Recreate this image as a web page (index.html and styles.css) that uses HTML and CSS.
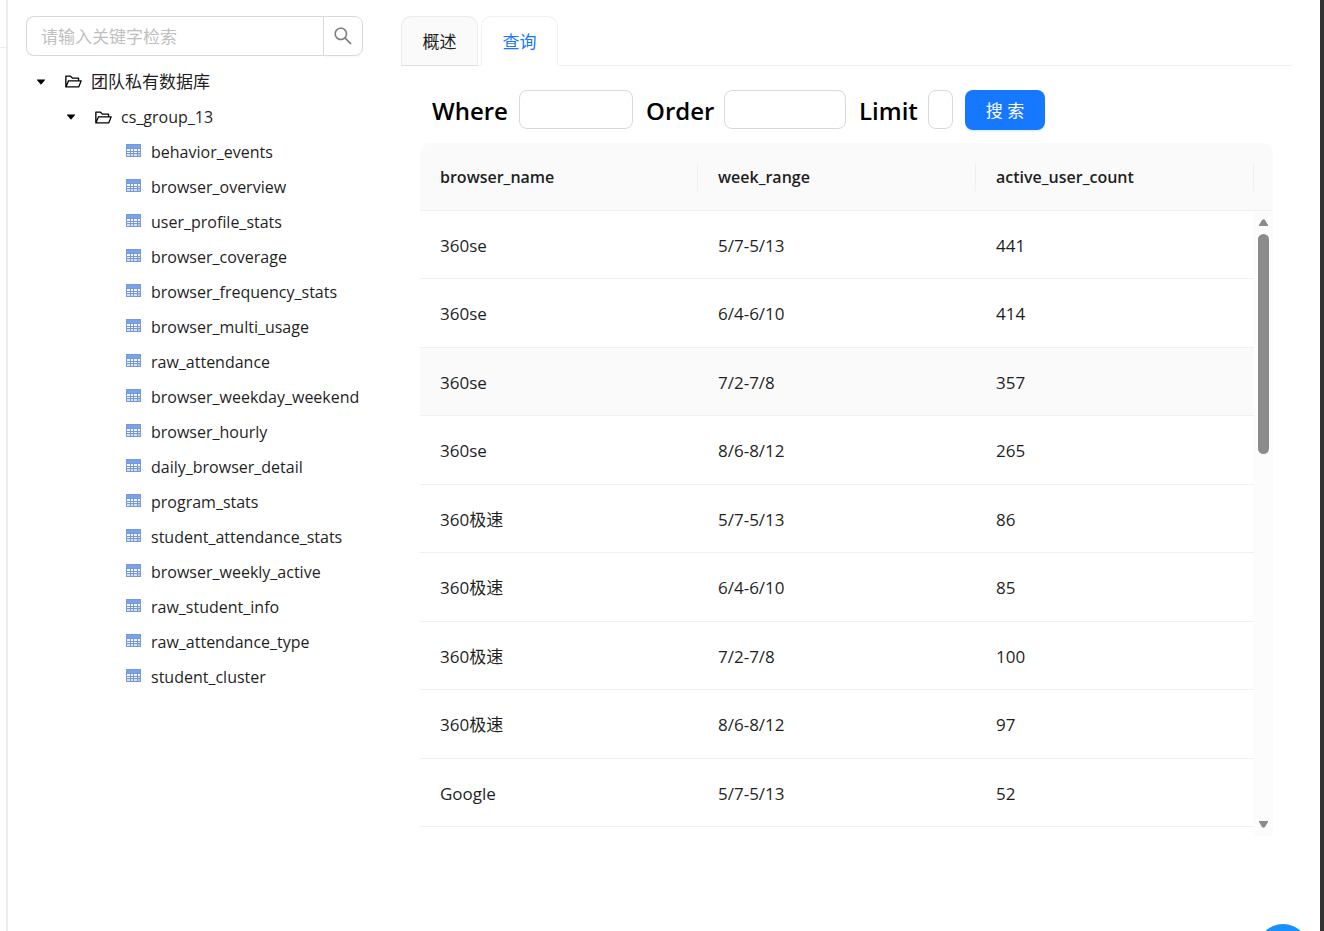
FILE: index.html
```html
<!DOCTYPE html>
<html lang="zh-CN">
<head>
<meta charset="utf-8">
<meta name="viewport" content="width=device-width, initial-scale=1">
<title>cs_group_13</title>
<link rel="stylesheet" href="styles.css">
</head>
<body>
<svg class="sprite" aria-hidden="true">
  <symbol id="folder" viewBox="0 0 1024 1024"><path d="M928 444H820V330.400c0-17.700-14.300-32-32-32H473L355.700 186.200a8.150 8.150 0 0 0-5.500-2.200H96c-17.700 0-32 14.300-32 32v592c0 17.700 14.300 32 32 32h698c13 0 24.800-7.900 29.700-20l134-332c1.500-3.800 2.300-7.900 2.300-12 0-17.700-14.300-32-32-32zM136 256h188.500l119.600 114.400H748V444H238c-13 0-24.800 7.900-29.700 20L136 643.200V256zm635.300 512H159l103.300-256h612.400L771.300 768z"/></symbol>
  <symbol id="caret" viewBox="0 0 1024 1024"><path d="M840.400 300H183.600c-19.700 0-30.700 20.800-18.500 35l328.400 380.800c9.400 10.900 27.500 10.900 37 0L858.900 335c12.200-14.200 1.200-35-18.500-35z"/></symbol>
  <symbol id="grid" viewBox="0 0 15 13">
    <rect width="15" height="13" fill="#7a98d2"/>
    <rect x="1" y="1" width="13" height="3" fill="#75a3ec"/>
    <path fill="#f2f8ff" d="M1 5h3v2H1zM5 5h2v2H5zM8 5h3v2H8zM12 5h2v2h-2zM1 8h3v1H1zM5 8h2v1H5zM8 8h3v1H8z"/>
    <path fill="#d0e2fb" d="M12 8h2v1h-2zM1 10h3v2H1zM5 10h2v2H5zM8 10h3v2H8z"/>
    <path fill="#aecbf5" d="M12 10h2v2h-2z"/>
  </symbol>
</svg>
<div class="app">
  <div class="rail"></div>
  <aside class="sidebar">
    <form class="search">
      <input class="search-input" type="text" placeholder="请输入关键字检索" aria-label="请输入关键字检索">
      <button class="search-button" type="button" aria-label="检索">
        <svg viewBox="0 0 1024 1024" width="22" height="22"><path fill="currentColor" d="M909.600 854.500L649.900 594.800C690.200 542.700 712 479 712 412c0-80.200-31.300-155.400-87.900-212.100-56.600-56.700-132-87.900-212.100-87.900s-155.500 31.300-212.100 87.900C143.200 256.500 112 331.800 112 412c0 80.100 31.300 155.500 87.900 212.100C256.500 680.800 331.800 712 412 712c67 0 130.600-21.800 182.700-62l259.700 259.600a8.200 8.200 0 0 0 11.600 0l43.600-43.500a8.200 8.200 0 0 0 0-11.600zM570.400 570.400C528 612.700 471.800 636 412 636s-116-23.300-158.400-65.600C211.300 528 188 471.800 188 412s23.300-116.100 65.600-158.400C296 211.300 352.200 188 412 188s116.100 23.200 158.400 65.600S636 352.200 636 412s-23.300 116.100-65.600 158.400z"/></svg>
      </button>
    </form>
    <ul class="tree">
      <li>
        <div class="node"><button class="toggle" type="button" aria-label="折叠"><svg class="caret"><use href="#caret"/></svg></button><a class="entry entry-root" href="#"><svg class="folder"><use href="#folder"/></svg>团队私有数据库</a></div>
        <ul class="branch">
          <li>
            <div class="node"><button class="toggle" type="button" aria-label="折叠"><svg class="caret"><use href="#caret"/></svg></button><a class="entry" href="#"><svg class="folder"><use href="#folder"/></svg>cs_group_13</a></div>
            <ul class="branch leaves">
              <li class="node"><a class="entry" href="#"><svg class="grid"><use href="#grid"/></svg>behavior_events</a></li>
              <li class="node"><a class="entry" href="#"><svg class="grid"><use href="#grid"/></svg>browser_overview</a></li>
              <li class="node"><a class="entry" href="#"><svg class="grid"><use href="#grid"/></svg>user_profile_stats</a></li>
              <li class="node"><a class="entry" href="#"><svg class="grid"><use href="#grid"/></svg>browser_coverage</a></li>
              <li class="node"><a class="entry" href="#"><svg class="grid"><use href="#grid"/></svg>browser_frequency_stats</a></li>
              <li class="node"><a class="entry" href="#"><svg class="grid"><use href="#grid"/></svg>browser_multi_usage</a></li>
              <li class="node"><a class="entry" href="#"><svg class="grid"><use href="#grid"/></svg>raw_attendance</a></li>
              <li class="node"><a class="entry" href="#"><svg class="grid"><use href="#grid"/></svg>browser_weekday_weekend</a></li>
              <li class="node"><a class="entry" href="#"><svg class="grid"><use href="#grid"/></svg>browser_hourly</a></li>
              <li class="node"><a class="entry" href="#"><svg class="grid"><use href="#grid"/></svg>daily_browser_detail</a></li>
              <li class="node"><a class="entry" href="#"><svg class="grid"><use href="#grid"/></svg>program_stats</a></li>
              <li class="node"><a class="entry" href="#"><svg class="grid"><use href="#grid"/></svg>student_attendance_stats</a></li>
              <li class="node"><a class="entry" href="#"><svg class="grid"><use href="#grid"/></svg>browser_weekly_active</a></li>
              <li class="node"><a class="entry" href="#"><svg class="grid"><use href="#grid"/></svg>raw_student_info</a></li>
              <li class="node"><a class="entry" href="#"><svg class="grid"><use href="#grid"/></svg>raw_attendance_type</a></li>
              <li class="node"><a class="entry" href="#"><svg class="grid"><use href="#grid"/></svg>student_cluster</a></li>
            </ul>
          </li>
        </ul>
      </li>
    </ul>
  </aside>
  <main class="main">
    <div class="tabs" role="tablist">
      <button class="tab" type="button" role="tab" aria-selected="false">概述</button>
      <button class="tab tab-active" type="button" role="tab" aria-selected="true">查询</button>
    </div>
    <section class="panel">
      <form class="query">
        <label class="query-label label-where" for="where">Where</label>
        <input class="query-input input-where" id="where" type="text">
        <label class="query-label label-order" for="order">Order</label>
        <input class="query-input input-order" id="order" type="text">
        <label class="query-label label-limit" for="limit">Limit</label>
        <input class="query-input input-limit" id="limit" type="text">
        <button class="submit" type="button">搜 索</button>
      </form>
      <div class="result">
        <table class="table">
          <thead><tr><th>browser_name</th><th>week_range</th><th>active_user_count</th></tr></thead>
          <tbody>
            <tr><td>360se</td><td>5/7-5/13</td><td>441</td></tr>
            <tr><td>360se</td><td>6/4-6/10</td><td>414</td></tr>
            <tr class="row-hover"><td>360se</td><td>7/2-7/8</td><td>357</td></tr>
            <tr><td>360se</td><td>8/6-8/12</td><td>265</td></tr>
            <tr><td>360极速</td><td>5/7-5/13</td><td>86</td></tr>
            <tr><td>360极速</td><td>6/4-6/10</td><td>85</td></tr>
            <tr><td>360极速</td><td>7/2-7/8</td><td>100</td></tr>
            <tr><td>360极速</td><td>8/6-8/12</td><td>97</td></tr>
            <tr><td>Google</td><td>5/7-5/13</td><td>52</td></tr>
          </tbody>
        </table>
        <div class="scroll">
          <div class="scroll-head"></div>
          <div class="scrollbar">
            <svg width="11" height="8" viewBox="0 0 11 8"><path fill="#8b8b8b" d="M4 1Q5.500 -0.500 7 1L10 6V7H1V6Z"/></svg>
            <div class="track"><div class="thumb"></div></div>
            <svg width="11" height="8" viewBox="0 0 11 8"><path fill="#8b8b8b" d="M4 7Q5.500 8.500 7 7L10 2V1H1V2Z"/></svg>
          </div>
        </div>
      </div>
    </section>
  </main>
  <div class="edge"></div>
</div>
<button class="float" type="button" aria-label="帮助"></button>
</body>
</html>
```
FILE: styles.css
```css
* { box-sizing: border-box; }

body {
  margin: 0;
  overflow: hidden;
  background: #fff;
  color: #1f1f1f;
  font-family: "Open Sans", "Noto Sans CJK SC", sans-serif;
  font-size: 17px;
  line-height: 27px;
}

button, input { font: inherit; color: inherit; }
button { cursor: pointer; }
ul { margin: 0; padding: 0; list-style: none; }
a { color: inherit; text-decoration: none; }
.sprite { display: none; }

.app { display: flex; min-height: 100vh; }

.rail { width: 8px; flex: none; border-right: 2px solid #ededed; }
.rail::before { content: ""; display: block; height: 47px; border-bottom: 1px solid #ededed; }

.sidebar { width: 393px; flex: none; padding: 16px 38px 0 18px; }

.search { display: flex; height: 40px; margin-bottom: 8px; }
.search-input {
  flex: 1;
  min-width: 0;
  padding: 0 14px;
  border: 1px solid #d9d9d9;
  border-right: 0;
  border-radius: 8px 0 0 8px;
  outline: 0;
}
.search-input::placeholder { color: #bfbfbf; }
.search-button {
  display: grid;
  place-items: center;
  width: 40px;
  padding: 0;
  border: 1px solid #d9d9d9;
  border-radius: 0 8px 8px 0;
  background: #fff;
  color: #7f7f7f;
  box-shadow: 0 2px 0 rgba(0, 0, 0, 0.02);
}

.node { display: flex; height: 35px; }
.toggle { display: grid; place-items: center; width: 30px; padding: 0; border: 0; background: none; }
.branch { padding-left: 30px; }
.leaves { padding-left: 60px; }
.entry { display: flex; align-items: center; gap: 8px; padding: 2px 0 0 8px; white-space: nowrap; font-size: 16px; }
.entry-root { padding-top: 0; font-size: 17px; }
.caret { width: 12px; height: 12px; }
.folder { width: 19px; height: 19px; }
.grid { width: 15px; height: 13px; margin: 0 2px 4px; }

.main { flex: 1; min-width: 0; padding: 16px 28px 0 0; }

.tabs { display: flex; gap: 3px; height: 50px; box-shadow: inset 0 -1px #f0f0f0; }
.tab {
  width: 77px;
  padding: 0;
  border: 1px solid #ebebeb;
  border-bottom-color: #e0e0e0;
  border-radius: 10px 10px 0 0;
  background: #fafafa;
}
.tab-active { border-color: #f0f0f0; border-bottom-color: #fff; background: #fff; color: #1677ff; }

.panel { padding: 24px 19px 0; }

.query { display: flex; height: 40px; margin: 0 0 13px 12px; }
.query-label { color: #000; font-size: 24px; font-weight: 600; line-height: 42px; white-space: nowrap; }
.label-where { width: 87px; }
.label-order { width: 78px; }
.label-limit { width: 69px; }
.query-input { height: 39px; padding: 0 8px; margin-right: 13px; border: 1px solid #d9d9d9; border-radius: 8px; }
.input-where { width: 114px; }
.input-order { width: 122px; }
.input-limit { width: 25px; margin-right: 12px; }
.submit {
  width: 80px;
  padding: 0;
  border: 0;
  border-radius: 8px;
  background: #1677ff;
  color: #fff;
  box-shadow: 0 2px 0 rgba(5, 145, 255, 0.1);
}

.result { display: flex; }
.table { flex: 1; width: 100%; table-layout: fixed; border-spacing: 0; align-self: flex-start; }
th, td { padding: 1px 20px 0; border-bottom: 1px solid #f0f0f0; text-align: left; }
th {
  height: 68px;
  background: linear-gradient(#f0f0f0, #f0f0f0) right center / 1px 28px no-repeat #fafafa;
  font-size: 16px;
  font-weight: 600;
}
th:first-child { border-top-left-radius: 10px; }
td { height: 68px; font-size: 17px; }
tr:nth-child(even) td { height: 69px; }
.row-hover td { background: #fafafa; }

.scroll { display: flex; flex: none; flex-direction: column; width: 19px; }
.scroll-head { height: 68px; border-bottom: 1px solid #f0f0f0; border-radius: 0 10px 0 0; background: #fafafa; }
.scrollbar {
  display: flex;
  flex-direction: column;
  align-items: center;
  gap: 7px;
  height: 625px;
  padding: 8px 0;
  background: #fcfcfc;
}
.track { flex: 1; }
.thumb { width: 11px; height: 220px; border-radius: 6px; background: #8b8b8b; }

.edge { width: 4px; flex: none; background: #333; }

.float {
  position: fixed;
  right: 15px;
  bottom: -45px;
  width: 52px;
  height: 52px;
  border: 0;
  border-radius: 50%;
  background: #1890ff;
}
```
